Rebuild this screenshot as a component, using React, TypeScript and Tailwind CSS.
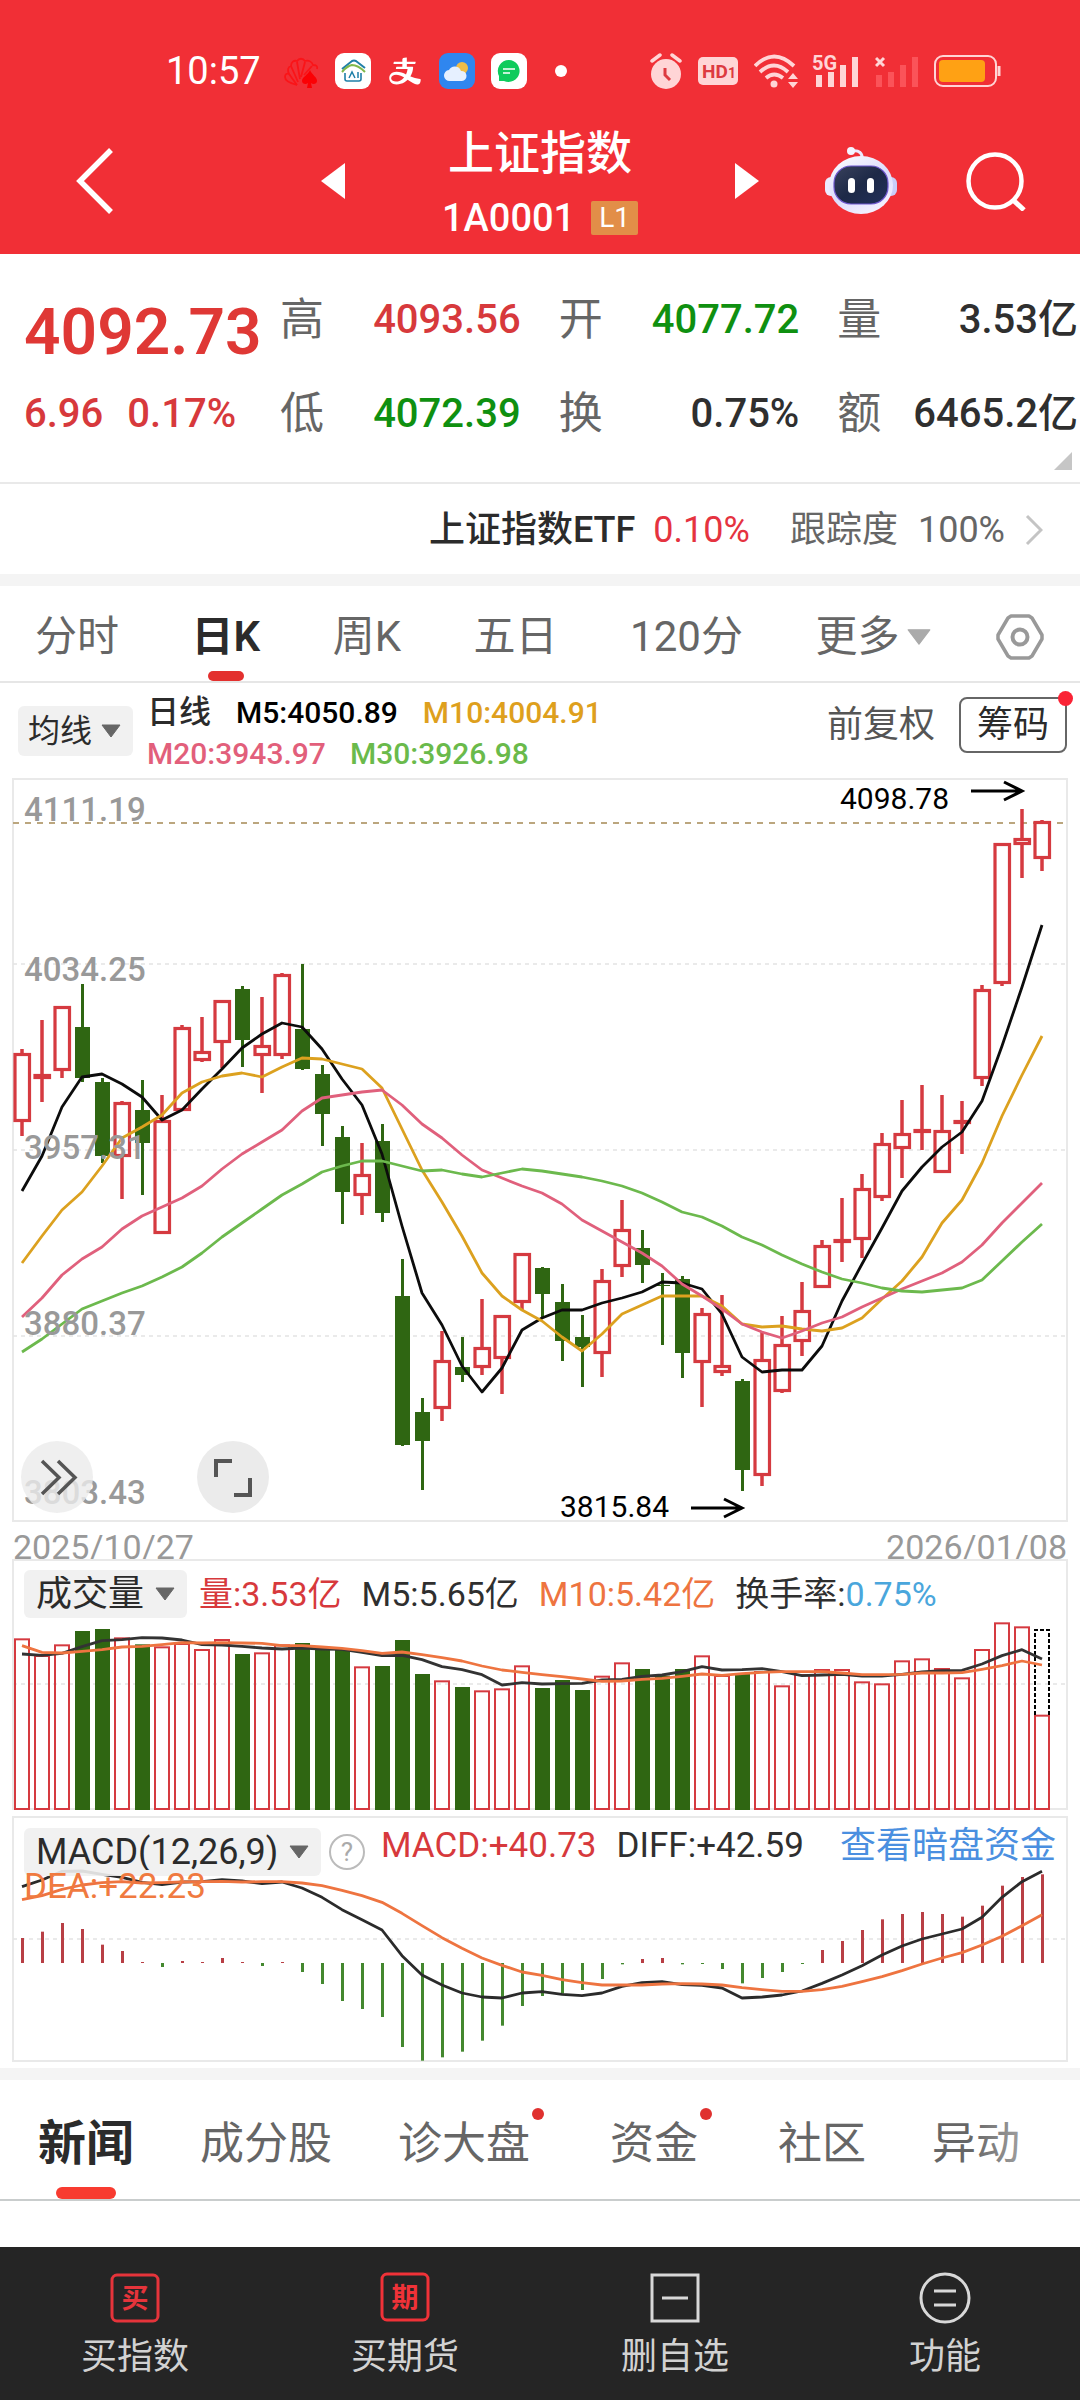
import type { ReactNode } from "react";
import { AiOutlineAlipay } from "react-icons/ai";

const UP = "#d53a40";
const DOWN = "#2f6612";
const GRID = "#e9e9e9";

// centre of the n-th trading day on the shared time axis
const dayX = (i: number) => 22 + i * 20;

// "r" is a rising day, "g" a falling one: [kind, high, body top, body bottom, low]
type Candle = ["r" | "g", number, number, number, number];

const candles: Candle[] = [
  ["r", 1050, 1054, 1123, 1137],
  ["r", 1021, 1075, 1080, 1103],
  ["r", 1007, 1007, 1072, 1079],
  ["g", 985, 1028, 1079, 1083],
  ["g", 1079, 1083, 1157, 1164],
  ["r", 1102, 1103, 1158, 1200],
  ["g", 1081, 1111, 1144, 1196],
  ["r", 1096, 1121, 1235, 1235],
  ["r", 1026, 1028, 1112, 1112],
  ["r", 1018, 1052, 1062, 1063],
  ["r", 1001, 1001, 1044, 1069],
  ["g", 987, 990, 1041, 1068],
  ["r", 998, 1046, 1057, 1094],
  ["r", 974, 975, 1057, 1060],
  ["g", 965, 1030, 1070, 1071],
  ["g", 1066, 1075, 1115, 1147],
  ["g", 1127, 1138, 1193, 1225],
  ["r", 1144, 1175, 1197, 1216],
  ["g", 1125, 1142, 1214, 1223],
  ["g", 1260, 1297, 1446, 1447],
  ["g", 1399, 1413, 1442, 1491],
  ["r", 1332, 1361, 1410, 1422],
  ["g", 1338, 1368, 1376, 1383],
  ["r", 1300, 1348, 1369, 1376],
  ["r", 1316, 1316, 1360, 1395],
  ["r", 1254, 1254, 1304, 1311],
  ["g", 1268, 1269, 1295, 1319],
  ["g", 1285, 1303, 1342, 1362],
  ["g", 1316, 1338, 1348, 1388],
  ["r", 1270, 1281, 1355, 1378],
  ["r", 1201, 1230, 1268, 1278],
  ["g", 1231, 1249, 1266, 1284],
  ["g", 1274, 1286, 1287, 1346],
  ["g", 1277, 1280, 1354, 1379],
  ["r", 1309, 1314, 1364, 1408],
  ["r", 1296, 1366, 1374, 1377],
  ["g", 1380, 1382, 1471, 1492],
  ["r", 1333, 1360, 1477, 1487],
  ["r", 1317, 1345, 1393, 1394],
  ["r", 1283, 1311, 1343, 1357],
  ["r", 1241, 1246, 1289, 1289],
  ["r", 1199, 1240, 1244, 1263],
  ["r", 1175, 1189, 1241, 1259],
  ["r", 1134, 1144, 1199, 1202],
  ["r", 1101, 1134, 1150, 1179],
  ["r", 1086, 1130, 1134, 1151],
  ["r", 1096, 1131, 1174, 1174],
  ["r", 1102, 1121, 1124, 1155],
  ["r", 986, 990, 1080, 1087],
  ["r", 844, 844, 985, 987],
  ["r", 810, 839, 846, 879],
  ["r", 821, 822, 860, 872],
];

const ma5 = [
  1192, 1157, 1108, 1078, 1075, 1085, 1098, 1121, 1111, 1090, 1070, 1049, 1035, 1024, 1028, 1050, 1080, 1106,
  1155, 1227, 1294, 1326, 1367, 1393, 1369, 1331, 1319, 1311, 1311, 1304, 1299, 1293, 1283, 1284, 1290, 1315,
  1358, 1373, 1371, 1371, 1347, 1302, 1265, 1229, 1192, 1168, 1148, 1133, 1102, 1047, 988, 926,
];
const ma10 = [
  1264, 1237, 1211, 1193, 1167, 1139, 1128, 1116, 1094, 1083, 1077, 1074, 1078, 1068, 1059, 1060, 1065, 1070,
  1089, 1130, 1171, 1203, 1237, 1274, 1297, 1311, 1322, 1338, 1352, 1335, 1315, 1306, 1297, 1297, 1297, 1307,
  1325, 1328, 1327, 1330, 1332, 1329, 1319, 1300, 1282, 1258, 1224, 1201, 1164, 1117, 1076, 1037,
];
const ma20 = [
  1318, 1299, 1276, 1260, 1248, 1230, 1217, 1208, 1199, 1187, 1170, 1155, 1143, 1131, 1112, 1099, 1096, 1093,
  1091, 1106, 1125, 1139, 1156, 1171, 1179, 1187, 1194, 1205, 1221, 1232, 1243, 1254, 1267, 1285, 1297, 1310,
  1325, 1333, 1339, 1332, 1324, 1318, 1308, 1299, 1290, 1282, 1274, 1263, 1246, 1224, 1204, 1184,
];
const ma30 = [
  1353, 1340, 1325, 1310, 1302, 1294, 1287, 1278, 1268, 1254, 1238, 1224, 1210, 1196, 1185, 1173, 1167, 1162,
  1162, 1167, 1172, 1171, 1175, 1178, 1174, 1170, 1172, 1175, 1178, 1182, 1187, 1194, 1203, 1213, 1218, 1227,
  1238, 1246, 1256, 1265, 1273, 1280, 1284, 1289, 1292, 1293, 1291, 1289, 1281, 1262, 1243, 1225,
];

// volume and MACD series are kept at triple resolution
const third = (v: number) => v / 3;

const volumes = [
  238, 288, 256, 216, 210, 235, 256, 262, 252, 270, 240, 285, 280, 256, 252, 270, 272, 322, 321, 243, 345, 364,
  384, 394, 388, 319, 387, 363, 393, 350, 310, 330, 350, 330, 289, 348, 342, 336, 379, 345, 330, 330, 367, 373,
  304, 298, 327, 355, 270, 190, 202, 467,
];
const volumeMa5 = [
  285, 289, 283, 263, 245, 242, 236, 237, 243, 257, 258, 262, 267, 270, 267, 270, 271, 280, 290, 289, 302, 323,
  332, 347, 378, 371, 375, 374, 373, 363, 361, 352, 348, 338, 323, 333, 332, 329, 338, 350, 348, 346, 351, 351,
  346, 339, 335, 334, 315, 290, 272, 300,
].map(third);
const volumeMa10 = [
  260, 280, 282, 277, 272, 264, 262, 257, 251, 252, 251, 252, 253, 260, 260, 264, 268, 275, 283, 279, 287, 296,
  306, 321, 333, 340, 347, 353, 360, 367, 366, 361, 358, 352, 345, 349, 344, 340, 338, 338, 338, 342, 347, 347,
  346, 342, 342, 341, 331, 320, 306, 318,
].map(third);

const MACD_ZERO = 1212;
const macdBars = [
  1137, 1118, 1092, 1110, 1157, 1176, 1209, 1224, 1206, 1209, 1197, 1209, 1221, 1209, 1239, 1275, 1326, 1350,
  1374, 1464, 1505, 1495, 1478, 1445, 1400, 1341, 1311, 1304, 1293, 1260, 1216, 1200, 1197, 1216, 1215, 1230,
  1273, 1257, 1239, 1215, 1173, 1146, 1113, 1081, 1065, 1059, 1065, 1073, 1040, 980, 954, 946,
];
const diff = [
  983, 963, 937, 936, 946, 955, 970, 977, 969, 968, 962, 966, 974, 969, 987, 1015, 1052, 1082, 1113, 1190, 1248,
  1278, 1302, 1314, 1317, 1302, 1298, 1306, 1310, 1302, 1282, 1271, 1268, 1277, 1279, 1287, 1317, 1314, 1308,
  1296, 1273, 1248, 1220, 1188, 1161, 1140, 1125, 1110, 1075, 1015, 968, 937,
].map(third);
const dea = [
  1022, 1010, 991, 978, 971, 968, 972, 971, 969, 968, 967, 969, 968, 968, 972, 980, 994, 1010, 1030, 1063, 1100,
  1136, 1168, 1197, 1219, 1239, 1249, 1262, 1271, 1278, 1278, 1278, 1275, 1274, 1275, 1278, 1286, 1292, 1297,
  1297, 1292, 1282, 1268, 1253, 1235, 1215, 1197, 1181, 1158, 1132, 1100, 1067,
].map(third);

function Curve({ values, color }: { values: number[]; color: string }) {
  const points = values.map((y, i) => `${dayX(i)},${y}`).join(" ");
  return <polyline points={points} fill="none" stroke={color} strokeWidth="2.8" strokeLinejoin="round" />;
}

function GridLine({ y }: { y: number }) {
  return <line x1="13" x2="1067" y1={y} y2={y} stroke="#e4e4e4" strokeWidth="1.5" strokeDasharray="4 4" />;
}

function Caret({ className }: { className: string }) {
  return (
    <svg viewBox="0 0 20 14" className={className}>
      <path d="M1 1h18l-9 12z" fill="currentColor" stroke="currentColor" strokeLinejoin="round" />
    </svg>
  );
}

function IndicatorSelect({ label, value, className }: { label: string; value: string; className: string }) {
  return (
    <div className="relative shrink-0">
      <select aria-label={label} className={`block appearance-none rounded-md bg-[#f0f0f0]/90 text-[#2b2b2b] ${className}`}>
        <option>{value}</option>
      </select>
      <Caret className="pointer-events-none absolute right-3 top-1/2 h-3.5 w-5 -translate-y-1/2 text-[#666]" />
    </div>
  );
}

function StatusBar() {
  return (
    <div className="flex h-10 items-center justify-between pl-[166px] pr-[79px]">
      <div className="flex items-center gap-4">
        <span className="mr-1.5 text-[38px] leading-10">10:57</span>
        <svg viewBox="0 0 36 36" className="size-9">
          <g fill="none" stroke="#fa1418" strokeWidth="1.800">
            <path d="M14 32C6 30 2 27 2 24s2-4 4-3c-2-4-1-7 2-8 0-4 3-6 6-5 2-3 6-3 8 0 4-1 7 1 8 4 3 0 5 1 4 4" />
            <path d="M14 32 6 21M15 29 8 13M17 26 14 9M18 24 22 9M21 22 29 13" />
          </g>
          <path d="M27 17c2 5 7 7 7 11 0 3-4 4-6 2l1 5h-5l1-5c-2 2-6 1-6-2 0-4 6-6 8-11z" fill="#fb0004" />
        </svg>
        <svg viewBox="0 0 36 36" className="size-9">
          <rect width="36" height="36" rx="9" fill="#fff" />
          <path d="M7 16 17 8q2-1 4 0l9 7" fill="none" stroke="#1f7fa8" strokeWidth="2" />
          <path d="M7 19q5-6 10-7 6 0 13 7" fill="none" stroke="#7fb84a" strokeWidth="2" />
          <path d="M10 20v6q0 2 2 2h12q2 0 2-2v-6" fill="none" stroke="#1f7fa8" strokeWidth="1.600" />
          <path d="m14 25 3-6 3 6M23 19v6" fill="none" stroke="#1f7fa8" strokeWidth="1.500" />
        </svg>
        <AiOutlineAlipay className="size-9" />
        <svg viewBox="0 0 36 36" className="size-9">
          <rect width="36" height="36" rx="9" fill="#2f86ef" />
          <circle cx="23" cy="15" r="6" fill="#f0bd48" />
          <path d="M11 28a5.500 5.500 0 0 1-1-11 6.500 6.500 0 0 1 12 1 5 5 0 0 1 1 10z" fill="#e6f0ff" />
        </svg>
        <svg viewBox="0 0 36 36" className="size-9">
          <rect width="36" height="36" rx="9" fill="#fff" />
          <path d="M18 7a11 11 0 1 1-5 21H8v-5A11 11 0 0 1 18 7z" fill="#0fcb5c" />
          <path d="M12 16h12M12 20h7" stroke="#fff" strokeWidth="1.600" />
        </svg>
        <span className="ml-3 size-3 rounded-full bg-white" />
      </div>
      <div className="flex items-center gap-4 text-[#ffd5d6]">
        <svg viewBox="0 0 32 36" className="h-9 w-8">
          <circle cx="16" cy="21" r="15" fill="currentColor" />
          <path d="m2 8 8-6M22 2l8 6" stroke="currentColor" strokeWidth="3.500" strokeLinecap="round" />
          <path d="M15 15v7l5 5" fill="none" stroke="#dd3a40" strokeWidth="3" />
        </svg>
        <svg viewBox="0 0 40 28" className="h-7 w-10">
          <rect width="40" height="28" rx="5" fill="currentColor" />
          <text x="4" y="21" fontSize="19" fontWeight="700" fill="#dd3a40">HD</text>
          <text x="30" y="21" fontSize="14" fontWeight="700" fill="#dd3a40">1</text>
        </svg>
        <svg viewBox="0 0 44 36" className="-mr-0.5 h-9 w-11">
          <g fill="none" stroke="currentColor" strokeWidth="3.800">
            <path d="M1 13q19-19 39 0" />
            <path d="M6 19q14-13 28 0" />
            <path d="M12 25q8-7 17 0" />
          </g>
          <circle cx="20" cy="31" r="3.500" fill="currentColor" />
          <path d="m39 20 5 6H34zM39 35l5-6H34z" fill="currentColor" />
        </svg>
        <svg viewBox="0 0 47 34" className="h-[34px] w-[47px] overflow-visible">
          <text x="0" y="16" fontSize="20" fontWeight="700" fill="currentColor">5G</text>
          <path d="M7 21v12M19 18v15M31 11v22M43 3v30" stroke="currentColor" strokeWidth="6" />
        </svg>
        <svg viewBox="0 0 43 34" className="h-[34px] w-[43px]">
          <path d="m1 4 8 8M9 4l-8 8" stroke="currentColor" strokeWidth="3" />
          <path d="M4 21v12M16 18v15M28 11v22M40 3v30" stroke="#fb5359" strokeWidth="6" />
        </svg>
        <svg viewBox="0 0 67 32" className="h-8 w-[67px]">
          <rect x="1" y="1" width="61" height="30" rx="8" fill="none" stroke="currentColor" strokeWidth="2" />
          <rect x="5" y="5" width="46" height="22" rx="4" fill="#ffa114" />
          <path d="M65 11v10" stroke="currentColor" strokeWidth="3" />
        </svg>
      </div>
    </div>
  );
}

function RobotIcon() {
  return (
    <svg viewBox="0 0 72 68" className="h-[68px] w-[72px]">
      <defs>
        <linearGradient id="shell" x1="0" y1="0" x2="0.6" y2="1">
          <stop offset="0" stopColor="#fff" />
          <stop offset="0.6" stopColor="#dcdcfb" />
          <stop offset="1" stopColor="#f3f0ff" />
        </linearGradient>
        <linearGradient id="visor" x1="0" y1="0" x2="1" y2="1">
          <stop offset="0" stopColor="#39415c" />
          <stop offset="0.5" stopColor="#1d2947" />
          <stop offset="1" stopColor="#22305a" />
        </linearGradient>
      </defs>
      <path d="M27 4c7-1 11 2 10 9" fill="none" stroke="#eceaff" strokeWidth="3" />
      <circle cx="26" cy="4" r="4" fill="#f4f4ff" />
      <rect x="0" y="30" width="12" height="19" rx="6" fill="#eceaff" />
      <rect x="60" y="30" width="12" height="19" rx="6" fill="#c9cdf8" />
      <ellipse cx="36" cy="38" rx="32" ry="29" fill="url(#shell)" />
      <rect x="9" y="19" width="54" height="38" rx="17" fill="url(#visor)" stroke="#6f58cf" strokeWidth="1.200" />
      <rect x="23" y="31" width="7" height="15" rx="3.500" fill="#fff" />
      <rect x="42" y="31" width="7" height="15" rx="3.500" fill="#fff" />
    </svg>
  );
}

function Header() {
  return (
    <header className="bg-[#f12f36] pt-[51px] text-white">
      <StatusBar />
      <div className="grid grid-cols-[1fr_438px_1fr] items-center pb-4 pt-8">
        <div className="pl-[74px]">
          <button aria-label="返回" className="block">
            <svg viewBox="0 0 40 68" className="h-[68px] w-10">
              <path d="M37 3 6 34l31 31" fill="none" stroke="currentColor" strokeWidth="5.500" />
            </svg>
          </button>
        </div>
        <div className="flex items-center justify-between">
          <button aria-label="上一个">
            <svg viewBox="0 0 24 36" className="h-9 w-6">
              <path d="M24 0v36L0 18z" fill="currentColor" />
            </svg>
          </button>
          <div className="flex flex-col items-center gap-[15px]">
            <h1 className="text-[46px] font-medium leading-[60px]">上证指数</h1>
            <div className="flex items-center gap-4 text-[38px] font-medium leading-10">
              1A0001
              <span className="rounded-xs bg-[#e28e48] px-2 text-[28px] font-normal leading-[34px]">L1</span>
            </div>
          </div>
          <button aria-label="下一个">
            <svg viewBox="0 0 24 36" className="h-9 w-6">
              <path d="M0 0v36l24-18z" fill="currentColor" />
            </svg>
          </button>
        </div>
        <div className="flex items-center justify-between pl-[66px] pr-[54px]">
          <button aria-label="智能助手">
            <RobotIcon />
          </button>
          <button aria-label="搜索">
            <svg viewBox="0 0 60 60" className="size-[60px]">
              <circle cx="29" cy="30" r="26.500" fill="none" stroke="currentColor" strokeWidth="4.500" />
              <path d="m47 49 11 10" stroke="currentColor" strokeWidth="5" />
            </svg>
          </button>
        </div>
      </div>
    </header>
  );
}

const stats = [
  { label: "高", value: "4093.56", tone: "text-[#d7393c]" },
  { label: "开", value: "4077.72", tone: "text-[#0f9010]" },
  { label: "量", value: "3.53亿", tone: "text-[#2f2f2f]" },
  { label: "低", value: "4072.39", tone: "text-[#0f9010]" },
  { label: "换", value: "0.75%", tone: "text-[#2f2f2f]" },
  { label: "额", value: "6465.2亿", tone: "text-[#2f2f2f]" },
];

function Quote() {
  return (
    <section className="border-b-2 border-[#e9e9e9] pb-3 pt-9">
      <div className="flex">
        <div className="w-[280px] shrink-0 pl-6 text-[#df3835]">
          <div className="text-[64px] font-semibold leading-[86px]">4092.73</div>
          <div className="mt-2 flex gap-6 text-[40px] font-medium leading-[60px] text-[#d7393c]">
            <span>6.96</span>
            <span>0.17%</span>
          </div>
        </div>
        <dl className="grid flex-1 grid-cols-3 gap-x-[38px] gap-y-[33px] pr-0.5 leading-[60px]">
          {stats.map((s) => (
            <div key={s.label} className="flex h-[60px] items-center justify-between whitespace-nowrap">
              <dt className="text-[44px] text-[#666]">{s.label}</dt>
              <dd className={`text-[40px] font-medium ${s.tone}`}>{s.value}</dd>
            </div>
          ))}
        </dl>
      </div>
      <svg viewBox="0 0 18 18" className="ml-auto mr-2 mt-2 size-[18px]">
        <path d="M18 0v18H0z" fill="#c6c6c6" />
      </svg>
    </section>
  );
}

function EtfRow() {
  return (
    <a
      href="#etf"
      className="flex h-[90px] items-center justify-end whitespace-nowrap pr-[37px] pt-0.5 text-[36px] leading-[48px] text-[#666]"
    >
      <span className="mr-[18px] font-medium text-[#2b2b2b]">上证指数ETF</span>
      <span className="mr-10 text-[#e5333f]">0.10%</span>
      <span className="mr-5">跟踪度</span>
      <span className="mr-5">100%</span>
      <svg viewBox="0 0 18 32" className="h-8 w-[18px]">
        <path d="m2 2 14 14L2 30" fill="none" stroke="#c4c4c4" strokeWidth="3" />
      </svg>
    </a>
  );
}

function PeriodTabs() {
  return (
    <nav className="flex h-[97px] items-center justify-between whitespace-nowrap border-b-2 border-[#e6e6e6] pl-[35px] pr-9 pt-1.5 text-[42px] leading-[60px] text-[#666]">
      <button>分时</button>
      <button className="relative flex h-full items-center font-semibold text-[#2b2b2b]">
        日K
        <span className="absolute bottom-0 left-1/2 h-2.5 w-9 -translate-x-1/2 rounded-full bg-[#e3302e]" />
      </button>
      <button>周K</button>
      <button>五日</button>
      <button>120分</button>
      <button className="flex items-center gap-2">
        更多
        <Caret className="h-[18px] w-6 text-[#aaa]" />
      </button>
      <button aria-label="设置" className="-ml-2">
        <svg viewBox="0 0 48 46" className="h-[46px] w-12">
          <path
            d="M15 2h18l3 2 10 17v4L36 42l-3 2H15l-3-2L2 25v-4L12 4z"
            fill="none"
            stroke="#999"
            strokeWidth="3.500"
            strokeLinejoin="round"
          />
          <circle cx="24" cy="23" r="7.500" fill="none" stroke="#999" strokeWidth="4" />
        </svg>
      </button>
    </nav>
  );
}

function PriceLegend() {
  return (
    <div className="flex h-[95px] items-center whitespace-nowrap pl-[18px] pr-[13px]">
      <IndicatorSelect label="主图指标" value="均线" className="h-[50px] pl-2.5 pr-10 text-[32px]" />
      <div className="ml-[14px] pt-1 text-[30px] font-medium leading-[41px]">
        <div className="flex gap-[25px]">
          <span className="text-[32px] text-[#2b2b2b]">日线</span>
          <span className="text-black">M5:4050.89</span>
          <span className="text-[#dea01d]">M10:4004.91</span>
        </div>
        <div className="flex gap-6">
          <span className="text-[#e25f7b]">M20:3943.97</span>
          <span className="text-[#6aba4b]">M30:3926.98</span>
        </div>
      </div>
      <div className="mb-3 ml-auto flex items-center gap-6 text-[36px]">
        <button className="text-[#555]">前复权</button>
        <button className="relative h-14 rounded-lg border-2 border-[#666] px-4 leading-[52px] text-[#2b2b2b]">
          筹码
          <span className="absolute -right-2 -top-2 size-[15px] rounded-full bg-[#fa2335]" />
        </button>
      </div>
    </div>
  );
}

const priceTicks = [
  { label: "4111.19", y: 822 },
  { label: "4034.25", y: 982 },
  { label: "3957.31", y: 1160 },
  { label: "3880.37", y: 1336 },
  { label: "3803.43", y: 1505 },
];

function PriceChart() {
  return (
    <div className="relative">
      <svg viewBox="0 779 1080 744" className="block w-full overflow-visible">
        <rect x="13" y="780" width="1054" height="742" fill="none" stroke={GRID} strokeWidth="2" />
        <GridLine y={965} />
        <GridLine y={1151} />
        <GridLine y={1337} />
        <line x1="13" x2="1067" y1="824" y2="824" stroke="#bba67e" strokeWidth="2" strokeDasharray="6 6" />
        {candles.map(([kind, high, top, bottom, low], i) => {
          const x = dayX(i);
          if (kind === "g") {
            return (
              <g key={i} fill={DOWN}>
                <rect x={x - 1} y={high} width="3" height={low - high} />
                <rect x={x - 7} y={top} width="15" height={bottom - top} />
              </g>
            );
          }
          return (
            <g key={i}>
              <path d={`M${x} ${high}V${top}M${x} ${bottom}V${low}`} stroke={UP} strokeWidth="3.5" />
              <rect
                x={x - 7}
                y={top + 1.5}
                width="14.5"
                height={Math.max(bottom - top - 3, 1)}
                fill="none"
                stroke={UP}
                strokeWidth="3.2"
              />
            </g>
          );
        })}
        <Curve values={ma5} color="#0c0c0c" />
        <Curve values={ma10} color="#dca11f" />
        <Curve values={ma20} color="#e0607c" />
        <Curve values={ma30} color="#6cb94d" />
        <g fontSize="33" fontWeight="500" fill="#999">
          {priceTicks.map((t) => (
            <text key={t.label} x="24" y={t.y}>{t.label}</text>
          ))}
        </g>
        <g fontSize="30" fill="#000">
          <text x="840" y="810">4098.78</text>
          <text x="560" y="1518">3815.84</text>
        </g>
        <g fill="none" stroke="#000" strokeWidth="3">
          <path d="M971 792h51m-18-9 18 9-18 9" />
          <path d="M691 1509h51m-18-9 18 9-18 9" />
        </g>
      </svg>
      <button aria-label="展开" className="absolute bottom-[9px] left-[21px] size-[72px] rounded-full bg-[#ebebeb]/80">
        <svg viewBox="0 0 72 72" fill="none" stroke="#555" strokeWidth="3.500">
          <path d="m21 20 17 16.500L21 53M37 20l17 16.500L37 53" />
        </svg>
      </button>
      <button aria-label="全屏" className="absolute bottom-[9px] left-[197px] size-[72px] rounded-full bg-[#ebebeb]">
        <svg viewBox="0 0 72 72" fill="none" stroke="#555" strokeWidth="4">
          <path d="M19 36V20h16M53 37v17H37" />
        </svg>
      </button>
    </div>
  );
}

function VolumeChart() {
  return (
    <div className="relative">
      <svg viewBox="0 0 1080 257" className="block w-full">
        <rect x="13" y="1" width="1054" height="249" fill="none" stroke={GRID} strokeWidth="2" />
        <GridLine y={125} />
        {volumes.map((v, i) => {
          const x = dayX(i);
          const top = third(v);
          return candles[i][0] === "g" ? (
            <rect key={i} x={x - 7} y={top} width="15" height={251 - top} fill={DOWN} />
          ) : (
            <rect key={i} x={x - 7} y={top + 1} width="14" height={249 - top} fill="none" stroke={UP} strokeWidth="2" />
          );
        })}
        {/* projected full-day volume */}
        <path d="M1035 156V71h14v85" fill="none" stroke="#000" strokeWidth="2" strokeDasharray="4 2" />
        <Curve values={volumeMa5} color="#333" />
        <Curve values={volumeMa10} color="#ee7440" />
      </svg>
      <div className="absolute inset-x-0 top-[11px] flex items-center whitespace-nowrap pl-6 text-[34px] leading-9">
        <IndicatorSelect label="副图指标一" value="成交量" className="h-12 pl-3 pr-[42px] text-[36px]" />
        <div className="ml-3 flex gap-5">
          <span className="text-[#d7393c]">量:3.53亿</span>
          <span className="text-[#2f2f2f]">M5:5.65亿</span>
          <span className="text-[#ee7440]">M10:5.42亿</span>
          <span className="text-[#2f2f2f]">
            换手率:<span className="text-[#4aa6dc]">0.75%</span>
          </span>
        </div>
      </div>
    </div>
  );
}

function MacdChart() {
  return (
    <div className="relative">
      <svg viewBox="0 257 1080 246" className="block w-full">
        <rect x="13" y="258" width="1054" height="244" fill="none" stroke={GRID} strokeWidth="2" />
        <GridLine y={380} />
        {macdBars.map((v, i) => {
          const rising = v < MACD_ZERO;
          return (
            <rect
              key={i}
              x={dayX(i) - 1}
              y={third(rising ? v : MACD_ZERO)}
              width="3"
              height={third(Math.abs(v - MACD_ZERO))}
              fill={rising ? "#b83f45" : "#44882f"}
            />
          );
        })}
        <Curve values={diff} color="#2b2b2b" />
        <Curve values={dea} color="#ee7440" />
      </svg>
      <div className="absolute inset-x-0 top-3 whitespace-nowrap pl-6 pr-6 text-[35px] leading-9">
        <div className="flex h-[41px] items-start">
          <IndicatorSelect label="副图指标二" value="MACD(12,26,9)" className="h-12 pl-3 pr-[42px] text-[36px]" />
          <button
            aria-label="指标说明"
            className="ml-2 mt-1.5 size-9 rounded-full border-2 border-[#bbb] text-[26px] leading-8 text-[#aaa]"
          >
            ?
          </button>
          <span className="ml-4 text-[#d7393c]">MACD:+40.73</span>
          <span className="ml-5 text-[#2f2f2f]">DIFF:+42.59</span>
          <a href="#flow" className="ml-auto text-[36px] text-[#4a8fe0]">查看暗盘资金</a>
        </div>
        <div className="relative text-[#f07a40]">DEA:+22.23</div>
      </div>
    </div>
  );
}

function ContentTab({ children, dot }: { children: ReactNode; dot?: boolean }) {
  return (
    <button className={dot ? "relative pr-3.5" : "relative"}>
      {children}
      {dot && <span className="absolute -top-1.5 right-0 size-3 rounded-full bg-[#e0312f]" />}
    </button>
  );
}

function ContentTabs() {
  return (
    <nav className="relative flex h-[121px] items-center gap-[66px] overflow-hidden whitespace-nowrap border-b-2 border-[#c9cdcd] pl-[38px] pt-2 text-[44px] leading-[60px] text-[#666]">
      <button className="relative flex h-full items-center text-[48px] font-semibold text-[#2b2b2b]">
        新闻
        <span className="absolute bottom-0 left-1/2 h-3 w-[60px] -translate-x-1/2 rounded-full bg-[#f83b30]" />
      </button>
      <ContentTab>成分股</ContentTab>
      <ContentTab dot>诊大盘</ContentTab>
      <ContentTab dot>资金</ContentTab>
      <ContentTab>社区</ContentTab>
      <ContentTab>异动</ContentTab>
      <span className="pointer-events-none absolute right-0 top-0 h-full w-[110px] bg-linear-to-r from-white/0 to-white/80" />
    </nav>
  );
}

function ActionItem({ label, children }: { label: string; children: ReactNode }) {
  return (
    <button className="flex flex-col items-center gap-2">
      <svg viewBox="0 0 52 52" className="size-[52px]" fill="none" strokeWidth="3">
        {children}
      </svg>
      <span className="text-[36px] leading-[50px]">{label}</span>
    </button>
  );
}

function ActionBar() {
  return (
    <footer className="mt-auto grid grid-cols-4 bg-[#252525] pb-[18px] pt-[25px] text-[#d2d2d2]">
      <ActionItem label="买指数">
        <rect x="3" y="3" width="46" height="46" rx="5" stroke="#e5343b" />
        <text x="26" y="36" textAnchor="middle" fontSize="27" fontWeight="700" fill="#e5343b">买</text>
      </ActionItem>
      <ActionItem label="买期货">
        <rect x="3" y="2" width="46" height="46" rx="5" stroke="#f03238" />
        <text x="26" y="35" textAnchor="middle" fontSize="27" fontWeight="700" fill="#f03238">期</text>
      </ActionItem>
      <ActionItem label="删自选">
        <path d="M3 3h46v46H3zM13 26h26" stroke="#d8d8d8" />
      </ActionItem>
      <ActionItem label="功能">
        <circle cx="26" cy="26" r="24" stroke="#d8d8d8" />
        <path d="M15 19h22M15 33h22" stroke="#d8d8d8" />
      </ActionItem>
    </footer>
  );
}

export default function App() {
  return (
    <div className="flex min-h-screen flex-col bg-white font-[Roboto,'Noto_Sans_CJK_SC',sans-serif]">
      <Header />
      <Quote />
      <EtfRow />
      <div className="h-3 bg-[#f4f4f4]" />
      <PeriodTabs />
      <PriceLegend />
      <PriceChart />
      <div className="flex h-[37px] justify-between px-[13px] text-[34px] leading-[50px] text-[#999]">
        <span>2025/10/27</span>
        <span>2026/01/08</span>
      </div>
      <VolumeChart />
      <MacdChart />
      <div className="mt-[6px] h-3 bg-[#f4f4f4]" />
      <ContentTabs />
      <ActionBar />
    </div>
  );
}
